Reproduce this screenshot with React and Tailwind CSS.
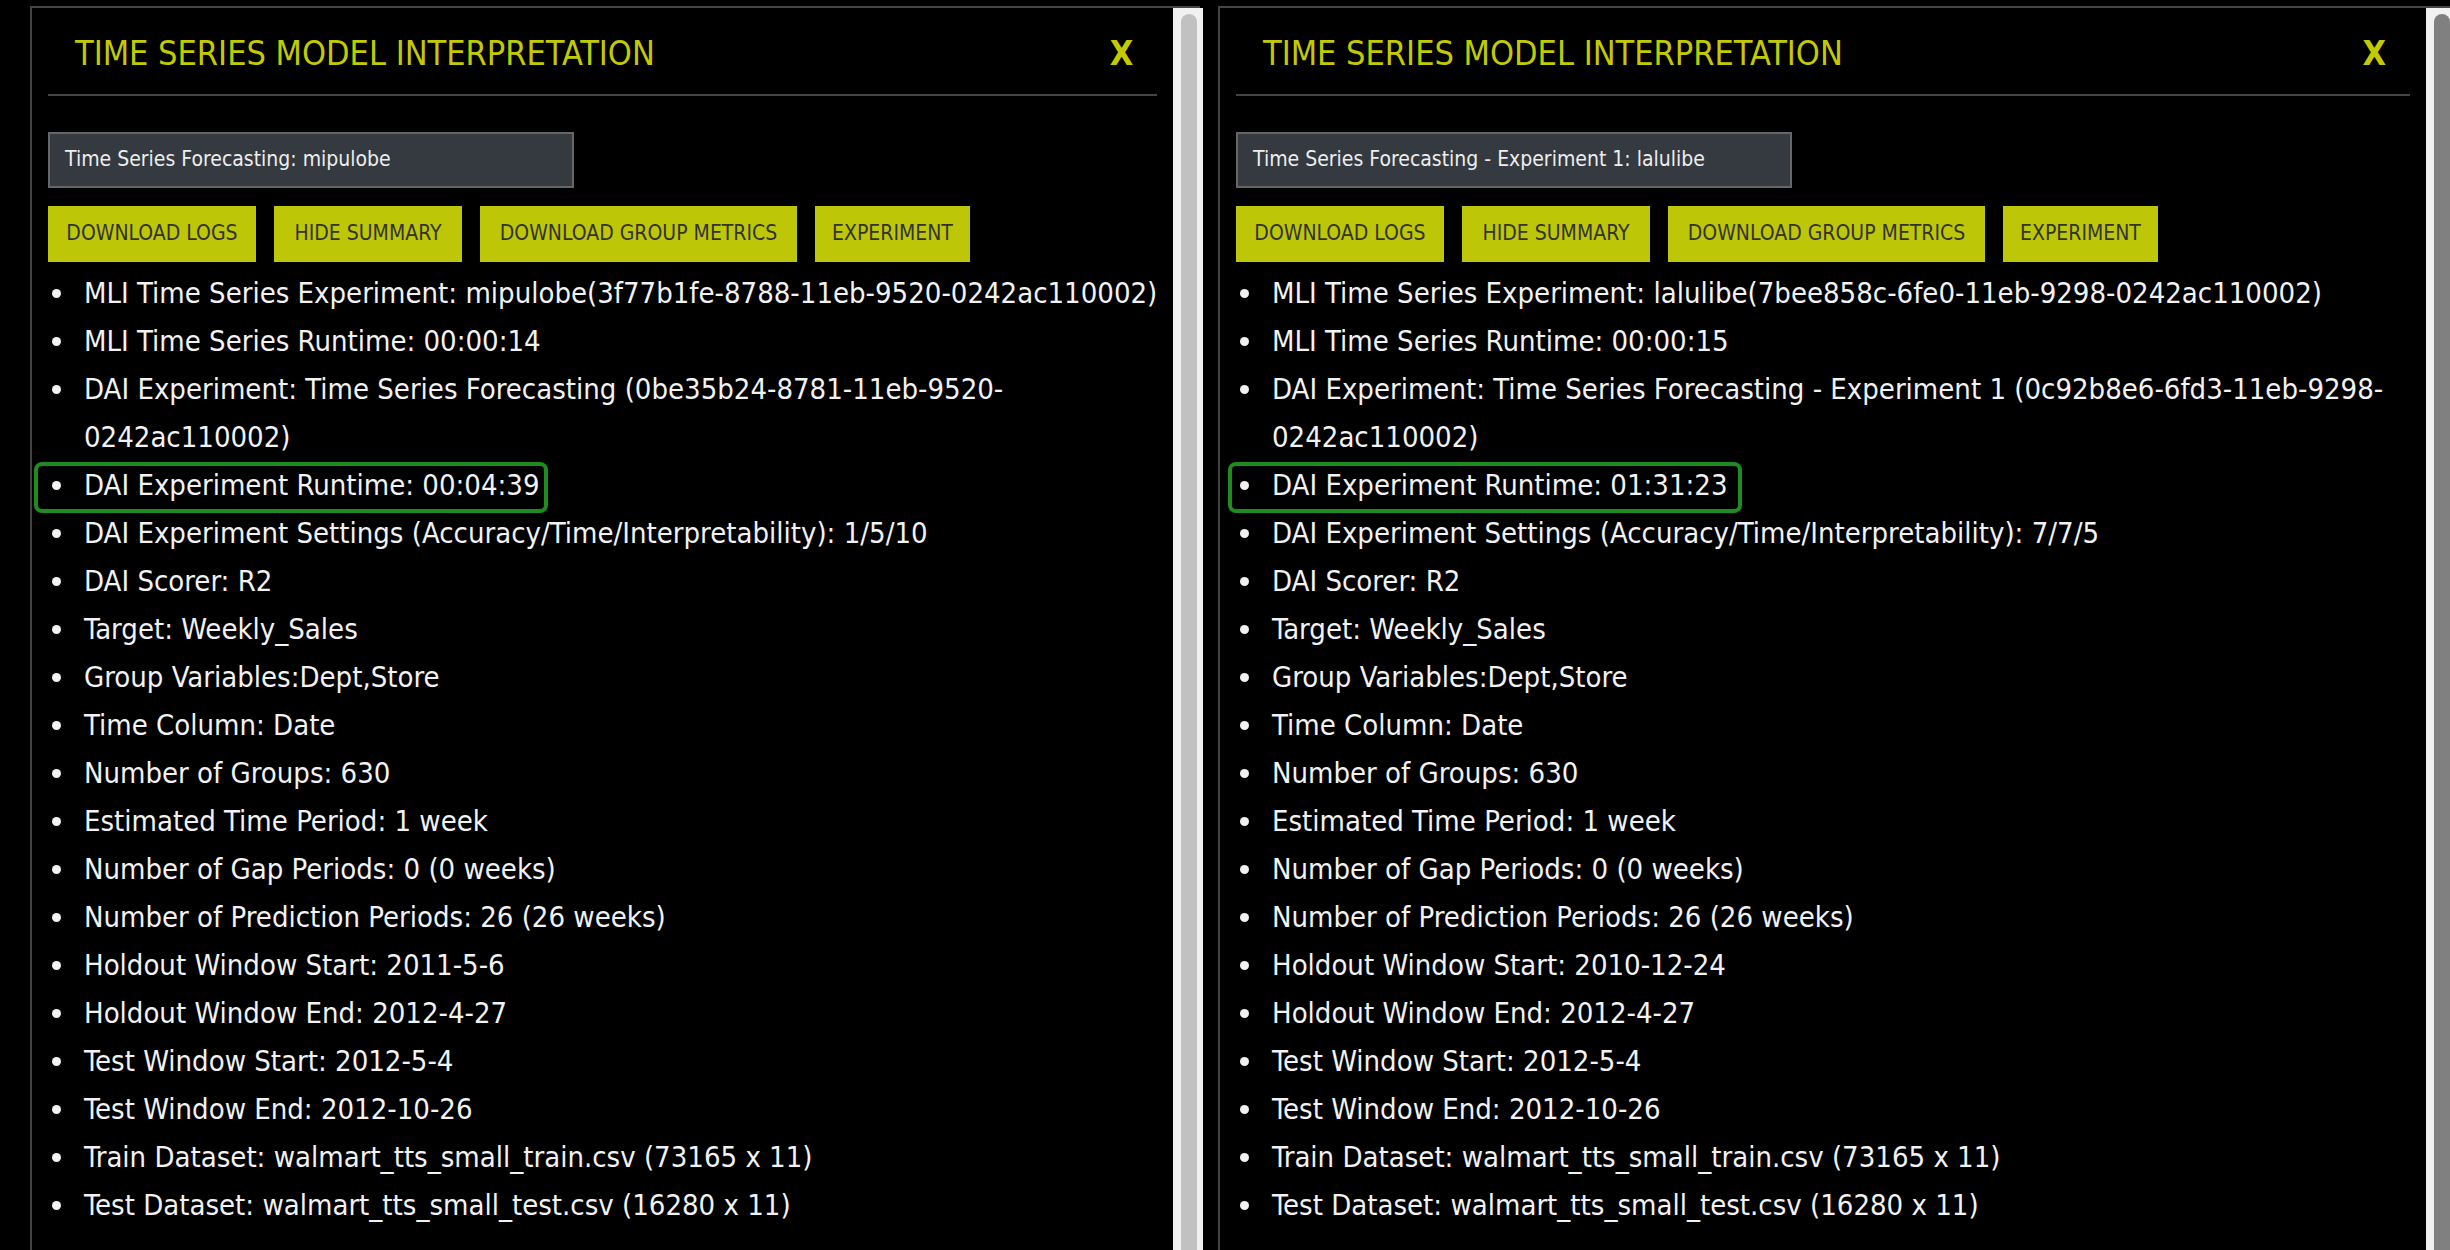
import React from 'react';

const FONT = "font-['DejaVu_Sans_Condensed','Liberation_Sans_Narrow','Roboto_Condensed',sans-serif]";

const common = [
  'DAI Scorer: R2',
  'Target: Weekly_Sales',
  'Group Variables:Dept,Store',
  'Time Column: Date',
  'Number of Groups: 630',
  'Estimated Time Period: 1 week',
  'Number of Gap Periods: 0 (0 weeks)',
  'Number of Prediction Periods: 26 (26 weeks)',
];

const tail = [
  'Holdout Window End: 2012-4-27',
  'Test Window Start: 2012-5-4',
  'Test Window End: 2012-10-26',
  'Train Dataset: walmart_tts_small_train.csv (73165 x 11)',
  'Test Dataset: walmart_tts_small_test.csv (16280 x 11)',
];

const panels = [
  {
    name: 'Time Series Forecasting: mipulobe',
    inputWidth: 'w-[526px]',
    panelWidth: 'w-[1170px]',
    boxOffset: '-left-[14px]',
    thumb: 'bg-[#c1c1c1]',
    items: [
      'MLI Time Series Experiment: mipulobe(3f77b1fe-8788-11eb-9520-0242ac110002)',
      'MLI Time Series Runtime: 00:00:14',
      ['DAI Experiment: Time Series Forecasting (0be35b24-8781-11eb-9520-', '0242ac110002)'],
      { highlight: true, text: 'DAI Experiment Runtime: 00:04:39' },
      'DAI Experiment Settings (Accuracy/Time/Interpretability): 1/5/10',
      ...common,
      'Holdout Window Start: 2011-5-6',
      ...tail,
    ],
  },
  {
    name: 'Time Series Forecasting - Experiment 1: lalulibe',
    inputWidth: 'w-[556px]',
    panelWidth: 'w-[1240px]',
    boxOffset: '-left-[8px]',
    thumb: 'bg-[#808080]',
    items: [
      'MLI Time Series Experiment: lalulibe(7bee858c-6fe0-11eb-9298-0242ac110002)',
      'MLI Time Series Runtime: 00:00:15',
      ['DAI Experiment: Time Series Forecasting - Experiment 1 (0c92b8e6-6fd3-11eb-9298-', '0242ac110002)'],
      { highlight: true, text: 'DAI Experiment Runtime: 01:31:23' },
      'DAI Experiment Settings (Accuracy/Time/Interpretability): 7/7/5',
      ...common,
      'Holdout Window Start: 2010-12-24',
      ...tail,
    ],
  },
];

const buttons = [
  { label: 'DOWNLOAD LOGS', w: 'w-[208px]' },
  { label: 'HIDE SUMMARY', w: 'w-[188px]' },
  { label: 'DOWNLOAD GROUP METRICS', w: 'w-[317px]' },
  { label: 'EXPERIMENT', w: 'w-[155px]' },
];

function Item({ item, boxOffset }) {
  const highlight = typeof item === 'object' && item.highlight;
  let text = item;
  if (Array.isArray(item)) {
    text = (
      <>
        {item[0]}
        <br />
        {item[1]}
      </>
    );
  } else if (highlight) {
    text = item.text;
  }

  return (
    <li className="relative flex">
      {highlight && (
        <span className={`absolute ${boxOffset} top-[1px] h-[51px] w-[514px] rounded-[8px] border-[4px] border-[#1e8c1e]`} />
      )}
      <span className="flex w-[36px] shrink-0 justify-start pt-[20px] pl-[4px]">
        <span className="block h-[9px] w-[9px] rounded-full bg-[#f2f2f2]" />
      </span>
      <span className="flex-1 whitespace-nowrap">{text}</span>
    </li>
  );
}

function Panel({ panel }) {
  return (
    <div className={`${panel.panelWidth} h-[1300px] shrink-0 border-2 border-[#444] flex`}>
      <div className="flex-1 px-[16px]">
        {/* header */}
        <div className="flex h-[88px] items-center justify-between border-b-2 border-[#444] pt-[5px] pl-[27px] pr-[24px]">
          <h1 className="text-[34px] text-[#c3cb00]">TIME SERIES MODEL INTERPRETATION</h1>
          <span className="text-[34px] font-bold text-[#c3cb00]">X</span>
        </div>

        <div className={`mt-[36px] ${panel.inputWidth} h-[56px] flex items-center border-2 border-[#666] bg-[#343a40] px-[15px] text-[21px] text-[#eeeeee]`}>
          {panel.name}
        </div>

        <div className="mt-[18px] flex gap-[18px]">
          {buttons.map((b) => (
            <button key={b.label} className={`${b.w} h-[56px] bg-[#bdc607] text-center text-[21px] text-[#333333]`}>
              {b.label}
            </button>
          ))}
        </div>

        <ul className="mt-[7px] text-[29px] leading-[48px] text-[#f2f2f2]">
          {panel.items.map((item, i) => (
            <Item key={i} item={item} boxOffset={panel.boxOffset} />
          ))}
        </ul>
      </div>

      {/* scrollbar */}
      <div className="w-[30px] shrink-0 bg-[#f1f1f1] pt-[6px] pl-[8px]">
        <div className={`h-[1400px] w-[16px] rounded-t-full ${panel.thumb}`} />
      </div>
    </div>
  );
}

export default function App() {
  return (
    <div className={`${FONT} flex h-[1250px] w-[2450px] gap-[18px] overflow-hidden bg-black pt-[6px] pl-[30px]`}>
      {panels.map((p) => (
        <Panel key={p.name} panel={p} />
      ))}
    </div>
  );
}
